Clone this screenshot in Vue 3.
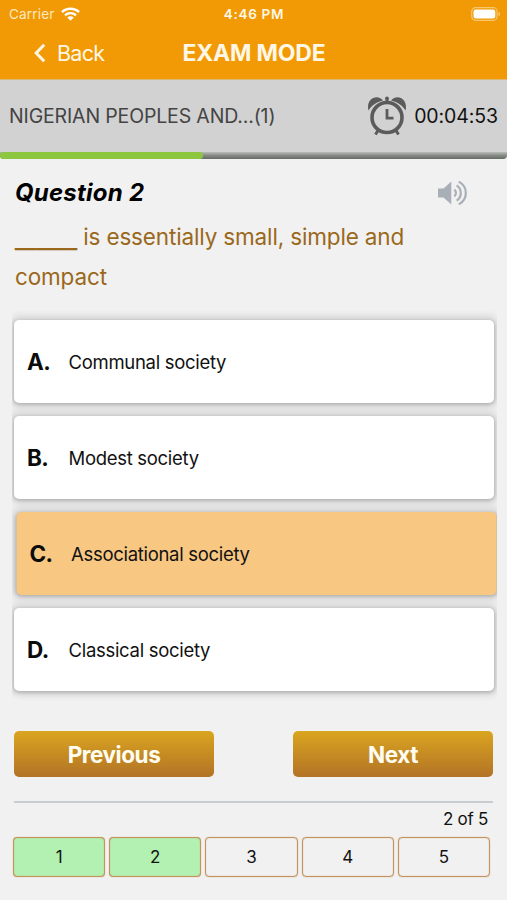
<script setup>
import { ref } from 'vue'

const options = [
  { key: 'A', text: 'Communal society' },
  { key: 'B', text: 'Modest society' },
  { key: 'C', text: 'Associational society' },
  { key: 'D', text: 'Classical society' },
]
const selected = ref('C')
const current = ref(2)
const total = 5
const progress = ref(40)
</script>

<template>
  <main class="screen">
    <header class="top">
      <div class="status">
        <div class="carrier">
          <span class="carrier-name">Carrier</span>
          <svg class="wifi" viewBox="0 0 18 13" width="19" height="14">
            <path d="M.9 4.700C5.300.4 12.700.4 17.100 4.700" />
            <path d="M3.800 7.700c2.900-2.700 7.500-2.700 10.400 0" />
            <path class="solid" d="M9 13 5.900 9.800c1.700-1.600 4.500-1.600 6.200 0z" />
          </svg>
        </div>
        <span class="clock">4:46 PM</span>
        <svg class="battery" viewBox="0 0 30 14" width="30" height="14">
          <rect class="shell" x=".7" y=".7" width="25.400" height="12.600" rx="3.800" />
          <rect class="charge" x="2.500" y="2.500" width="21.800" height="9" rx="2.200" />
          <path class="nub" d="M27.500 5c2.300.8 2.300 3.200 0 4z" />
        </svg>
      </div>
      <nav class="nav">
        <button class="back" type="button">
          <svg viewBox="0 0 12 20" width="12" height="20"><path d="M10.200 1.800 2.200 10l8 8.200" /></svg>
          <span>Back</span>
        </button>
        <h1>EXAM MODE</h1>
      </nav>
    </header>

    <section class="info">
      <span class="subject">NIGERIAN PEOPLES AND...(1)</span>
      <div class="timer">
        <svg class="alarm" viewBox="0 0 40 40" width="40" height="40">
          <path class="fill" d="M1.500 14.500C-.5 7 4 1.300 9.500 1.300c3 0 5 1.300 6.500 3.200C9.500 6 4.500 9.500 1.500 14.500z" />
          <path class="fill" d="M38.500 14.500C40.500 7 36 1.300 30.500 1.300c-3 0-5 1.300-6.500 3.200 6.500 1.500 11.500 5 14.500 10z" />
          <circle class="fill" cx="20" cy="2.300" r="1.900" />
          <path class="thin" d="M20 3v4M11 34.500 8.500 38.500M29 34.500l2.500 4" />
          <circle class="ring" cx="20" cy="21.500" r="15" />
          <path class="hands" d="M20 13v9.200h6.500" />
        </svg>
        <time>00:04:53</time>
      </div>
    </section>
    <div class="track"><div class="bar" :style="{ width: progress + '%' }"></div></div>

    <section class="question">
      <div class="question-head">
        <h2>Question {{ current }}</h2>
        <svg class="speaker" viewBox="0 0 30 26" width="30" height="26">
          <path class="fill" d="M0 8.500h5.500L13.300 1.500v23l-7.800-7H0z" />
          <path d="M16.300 9.600c2.200 1.700 2.200 5.100 0 6.800M18.600 5.400c5.600 3.500 5.600 11.700 0 15.200M20.800 1.600c9.400 5.200 9.400 17.600 0 22.800" />
        </svg>
      </div>
      <p class="prompt"><span class="blank">______</span> is essentially small, simple and<br />compact</p>
    </section>

    <section class="options">
      <button
        v-for="option in options"
        :key="option.key"
        type="button"
        class="option"
        :class="{ selected: option.key === selected }"
        @click="selected = option.key"
      >
        <span class="letter">{{ option.key }}.</span>
        <span class="answer">{{ option.text }}</span>
      </button>
    </section>

    <div class="actions">
      <button type="button">Previous</button>
      <button type="button">Next</button>
    </div>

    <footer class="footer">
      <p class="count">{{ current }} of {{ total }}</p>
      <div class="pages">
        <span v-for="n in total" :key="n" class="page" :class="{ seen: n <= current }">{{ n }}</span>
      </div>
    </footer>
  </main>
</template>

<style>
body {
  background: #f1f1f1;
}
</style>

<style scoped>
.screen {
  box-sizing: border-box;
  width: 507px;
  height: 900px;
  overflow: hidden;
  background: #f1f1f1;
  color: #111;
  font-family: Inter, "Liberation Sans", sans-serif;
}
button {
  border: 0;
  padding: 0;
  font-family: inherit;
  color: inherit;
  background: none;
}
h1, h2, p {
  margin: 0;
}
.top {
  box-sizing: border-box;
  height: 80px;
  background: #f19a05;
  color: #fff7e6;
  border-bottom: 1px solid #dcb878;
}
.status {
  display: grid;
  grid-template-columns: 1fr auto 1fr;
  align-items: center;
  height: 27px;
  padding: 0 6px 0 9px;
}
.carrier {
  display: flex;
  align-items: center;
  gap: 6px;
}
.carrier-name {
  font-size: 13.5px;
  letter-spacing: 0.2px;
  color: #ffe9c0;
}
.wifi {
  fill: none;
  stroke: #fff;
  stroke-width: 2.3;
}
.wifi .solid {
  fill: #fff;
  stroke: none;
}
.clock {
  margin-right: 2px;
  font-size: 13.5px;
  font-weight: 600;
  letter-spacing: 0.7px;
}
.battery {
  justify-self: end;
}
.shell {
  fill: none;
  stroke: #f8c772;
  stroke-width: 1.2;
}
.charge {
  fill: #fff;
}
.nub {
  fill: #f8c772;
}
.nav {
  display: grid;
  grid-template-columns: 1fr auto 1fr;
  align-items: center;
  height: 52px;
  padding: 0 33px 0 34px;
}
.back {
  display: flex;
  align-items: center;
  gap: 11px;
  font-size: 21.5px;
  letter-spacing: -0.7px;
}
.back svg {
  fill: none;
  stroke: #fff7e6;
  stroke-width: 3;
}
h1 {
  font-size: 23px;
  font-weight: 700;
  letter-spacing: -0.2px;
  line-height: 28px;
  white-space: nowrap;
}
.info {
  display: flex;
  align-items: center;
  justify-content: space-between;
  height: 72px;
  padding: 0 9px;
  background: #d2d2d2;
}
.subject {
  font-size: 19.5px;
  letter-spacing: -0.15px;
  color: #444;
}
.timer {
  display: flex;
  align-items: center;
  gap: 7px;
  font-size: 19.5px;
  letter-spacing: -0.1px;
}
.alarm {
  fill: none;
  stroke: #5b5b5b;
}
.alarm .fill {
  fill: #5b5b5b;
  stroke: none;
}
.thin {
  stroke-width: 3;
}
.ring {
  stroke-width: 3.6;
}
.hands {
  stroke-width: 2.8;
}
.track {
  height: 7px;
  border-radius: 0 0 4px 4px;
  background: linear-gradient(#b9bdb8, #858a84 50%, #656a65);
}
.bar {
  height: 7px;
  border-radius: 4px;
  background: #8dc63f;
}
.question {
  padding: 18px 15px 0;
}
.question-head {
  display: flex;
  align-items: center;
  justify-content: space-between;
  height: 32px;
  padding-right: 24px;
}
h2 {
  font-size: 24px;
  font-style: italic;
  font-weight: 700;
  letter-spacing: 0.25px;
  line-height: 30px;
  color: #000;
}
.speaker {
  fill: none;
  stroke: #a9afb7;
  stroke-width: 2.2;
}
.speaker .fill {
  fill: #a9afb7;
  stroke: none;
}
.prompt {
  padding-top: 8px;
  font-size: 22.5px;
  letter-spacing: -0.15px;
  line-height: 40px;
  color: #9a681b;
  white-space: nowrap;
}
.blank {
  font-family: "Liberation Sans", sans-serif;
  font-size: 18.6px;
  letter-spacing: 0;
  line-height: 1;
  text-shadow: 0 1px 0 currentColor;
}
.options {
  display: flex;
  flex-direction: column;
  gap: 13px;
  margin: 13px 10px 0 12px;
  padding: 10px 3px 10px 2px;
  overflow: hidden;
}
.option {
  display: flex;
  align-items: center;
  height: 83px;
  padding-left: 13px;
  border-radius: 5px;
  background: #fff;
  box-shadow: 0 1px 4px rgba(0, 0, 0, 0.28), 0 0 7px 5px rgba(0, 0, 0, 0.09);
  text-align: left;
}
.selected {
  background: #f8c782;
  transform: translateX(2.5px);
}
.letter {
  width: 41.5px;
  font-size: 22.5px;
  font-weight: 700;
  letter-spacing: -0.6px;
  color: #0b0b0b;
}
.answer {
  font-size: 18.5px;
  letter-spacing: -0.3px;
}
.actions {
  display: flex;
  justify-content: space-between;
  margin: 30px 14px 0;
}
.actions button {
  width: 200px;
  height: 46px;
  border-radius: 5px;
  background: linear-gradient(#daa520, #b27326);
  color: #fffdf2;
  font-size: 22.5px;
  font-weight: 700;
  letter-spacing: -0.45px;
}
.footer {
  margin: 24px 14px 0;
  border-top: 2px solid #c9cdcf;
}
.count {
  padding: 5px 5px 0 0;
  font-size: 17px;
  letter-spacing: -0.3px;
  line-height: 22px;
  text-align: right;
}
.pages {
  display: flex;
  gap: 4px;
  padding: 7px 3px 0 0;
  margin-left: -1px;
}
.page {
  box-sizing: border-box;
  flex: 1;
  height: 40px;
  border: 1px solid #c4935e;
  border-radius: 4px;
  box-shadow: inset 0 0 1px #c4935e, 0 0 1px #c4935e;
  font-size: 17px;
  line-height: 38px;
  text-align: center;
}
.seen {
  background: #b2f1b1;
}
</style>
